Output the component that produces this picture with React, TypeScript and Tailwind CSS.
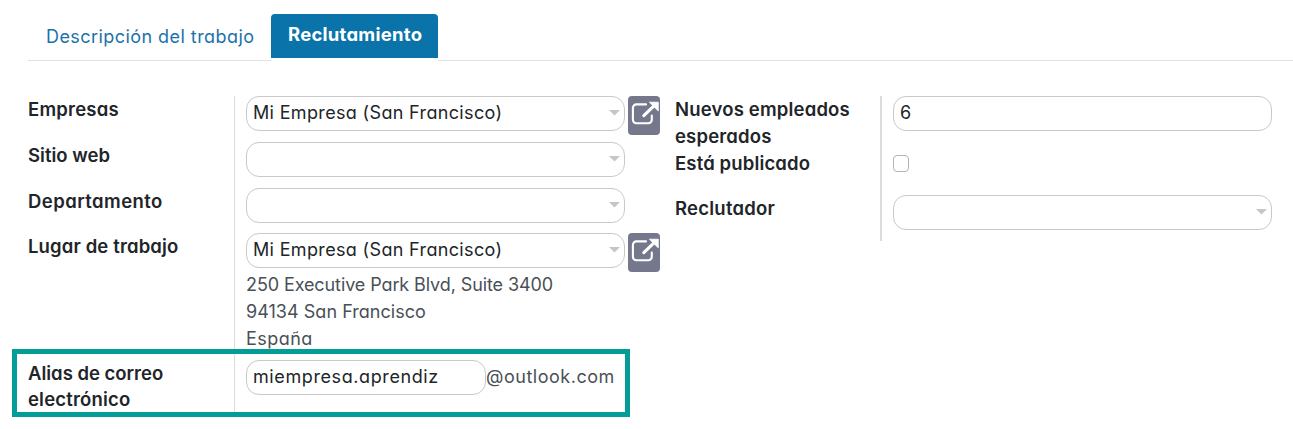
import type { ReactNode } from "react";

function Caret() {
  return (
    <svg className="mt-[13px] h-[6px] w-[11px] shrink-0" viewBox="0 0 11 6" fill="#c6c6c6">
      <path d="M0 0H11L5.5 5.5Z" />
    </svg>
  );
}

function Field({ children, caret = false, className = "w-[379px]" }: { children?: ReactNode; caret?: boolean; className?: string }) {
  return (
    <div className={`flex h-[35px] shrink-0 items-start justify-between rounded-[13px] border border-[#c9c9c9] bg-white pl-[6px] pr-[4px] text-[#212529] ${className}`}>
      <span className="leading-[32px]">{children}</span>
      {caret && <Caret />}
    </div>
  );
}

function OpenButton() {
  return (
    <button type="button" aria-label="Abrir" className="ml-[3px] h-[39px] w-8 shrink-0 rounded-[4px] bg-[#75788d]">
      <svg className="h-[39px] w-8" viewBox="0 0 32 39" fill="none">
        <path
          d="M18 8.4H8.3A3.4 3.4 0 0 0 4.9 11.8V23.8A3.4 3.4 0 0 0 8.3 27.2H20.4A3.4 3.4 0 0 0 23.8 23.8V19.5"
          stroke="white"
          strokeWidth="2.1"
          strokeLinecap="round"
        />
        <path d="M15.8 19.6L26.5 9.4" stroke="white" strokeWidth="3.1" strokeLinecap="round" />
        <path d="M21.4 6.2H30.3V14.9Z" fill="white" stroke="white" strokeWidth="0.8" strokeLinejoin="round" />
      </svg>
    </button>
  );
}

function Row({ label, height, labelClass = "leading-[27px] -mt-[0.5px]", children }: { label: ReactNode; height: string; labelClass?: string; children: ReactNode }) {
  return (
    <div className={`flex ${height}`}>
      <div className={`w-[206px] shrink-0 text-[18.5px] font-semibold text-[#212529] ${labelClass}`}>{label}</div>
      <div className="pl-3">{children}</div>
    </div>
  );
}

export default function App() {
  return (
    <div className="relative h-[429px] w-[1293px] overflow-hidden bg-white font-['Inter','Open_Sans',sans-serif] text-[18px] font-normal text-[#495057] [font-feature-settings:'cv11']">
      <nav className="ml-7 flex h-[61px] border-b border-[#dee2e6] pt-[14px]">
        <a className="w-[243px] whitespace-nowrap pl-[18px] pt-[9px] leading-[27px] tracking-[0.44px] text-[#1c72a8]">
          Descripción del trabajo
        </a>
        <div className="-mb-px h-[47px] bg-white">
          <a className="block h-[44px] w-[167px] whitespace-nowrap rounded-t-[4px] bg-[#0a73aa] pl-[17px] pt-[7px] text-[18.5px] font-bold leading-[27px] tracking-[0.25px] text-white">
            Reclutamiento
          </a>
        </div>
      </nav>

      <main className="flex pl-7 pt-[35px]">
        <section className="flex w-[647px] bg-[linear-gradient(#dcdcdc,#dcdcdc)] bg-size-[1px_316px] bg-position-[206px_0] bg-no-repeat">
          <div className="flex flex-col">
            <Row height="h-[46px]" label={<span className="tracking-[0.2px]">Empresas</span>}>
              <div className="flex">
                <Field caret><span className="tracking-[0.34px]">Mi Empresa (San Francisco)</span></Field>
                <OpenButton />
              </div>
            </Row>
            <Row height="h-[46px]" label={<span className="tracking-[0.02px]">Sitio web</span>}>
              <Field caret />
            </Row>
            <Row height="h-[45px]" label={<span className="tracking-[0.44px]">Departamento</span>}>
              <Field caret />
            </Row>
            <Row height="h-[127px]" label={<span className="tracking-[0.13px]">Lugar de trabajo</span>}>
              <div className="flex h-[38px]">
                <Field caret><span className="tracking-[0.34px]">Mi Empresa (San Francisco)</span></Field>
                <OpenButton />
              </div>
              <div className="whitespace-nowrap leading-[27px]">
                <div className="tracking-[-0.1px]">250 Executive Park Blvd, Suite 3400</div>
                <div className="tracking-[0.03px]">94134 San Francisco</div>
                <div className="tracking-[0.45px]">España</div>
              </div>
            </Row>
            <Row
              height="h-[52px]"
              labelClass="leading-[26px]"
              label={
                <>
                  <div className="tracking-[-0.01px]">Alias de correo</div>
                  <div className="tracking-[0.18px]">electrónico</div>
                </>
              }
            >
              <div className="flex">
                <Field className="w-[240px]"><span className="tracking-[0.6px]">miempresa.aprendiz</span></Field>
                <span className="leading-[34px] tracking-[0.52px]">@outlook.com</span>
              </div>
            </Row>
          </div>
        </section>

        <section className="h-[145px] bg-[linear-gradient(#dcdcdc,#dcdcdc)] bg-size-[2px_145px] bg-position-[205px_0] bg-no-repeat">
          <Row
            height="h-[54px]"
            label={
              <>
                <div className="tracking-[0.18px]">Nuevos empleados</div>
                <div className="tracking-[0.16px]">esperados</div>
              </>
            }
          >
            <Field>6</Field>
          </Row>
          <Row height="h-[45px]" label={<span className="tracking-[0.14px]">Está publicado</span>}>
            <input type="checkbox" className="mt-[5px] block h-[17px] w-4 appearance-none rounded-[4px] border border-[#adb5bd] bg-white" />
          </Row>
          <Row height="h-[46px]" label={<span className="tracking-[0.24px]">Reclutador</span>}>
            <Field caret />
          </Row>
        </section>
      </main>

      <div className="pointer-events-none absolute left-3 top-[349px] h-[68px] w-[618px] border-[5px] border-[#049c96]" />
    </div>
  );
}
